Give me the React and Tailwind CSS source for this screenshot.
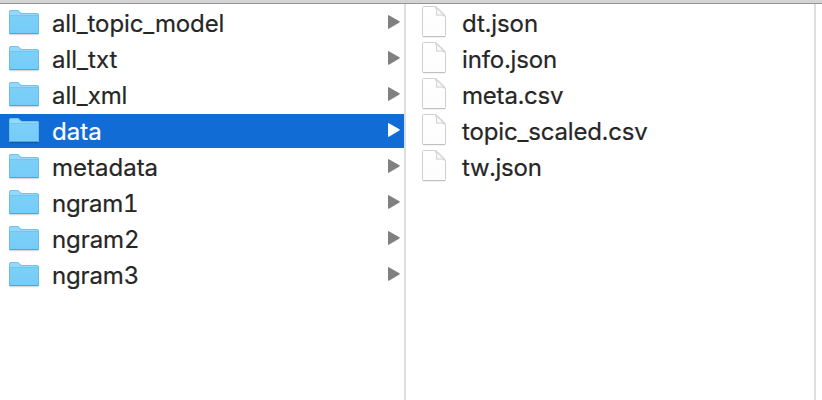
const folders = [
  { name: "all_topic_model", spacing: "tracking-[-0.11px]" },
  { name: "all_txt", spacing: "tracking-[0px]" },
  { name: "all_xml", spacing: "tracking-[-0.1px]" },
  { name: "data", spacing: "tracking-[0px]", selected: true },
  { name: "metadata", spacing: "tracking-[0px]" },
  { name: "ngram1", spacing: "tracking-[-0.3px]" },
  { name: "ngram2", spacing: "tracking-[-0.1px]" },
  { name: "ngram3", spacing: "tracking-[-0.15px]" },
];

const files = [
  { name: "dt.json", spacing: "tracking-[-0.05px]" },
  { name: "info.json", spacing: "tracking-[-0.1px]" },
  { name: "meta.csv", spacing: "tracking-[-0.2px]" },
  { name: "topic_scaled.csv", spacing: "tracking-[-0.16px]" },
  { name: "tw.json", spacing: "tracking-[-0.25px]" },
];

function Gradients() {
  return (
    <svg width="0" height="0" className="absolute">
      <defs>
        <linearGradient id="folderFront" x1="0" y1="0" x2="0" y2="1">
          <stop offset="0" stopColor="#7dcff7" />
          <stop offset="1" stopColor="#74cdf8" />
        </linearGradient>
        <linearGradient id="paper" x1="0" y1="0" x2="0" y2="1">
          <stop offset="0" stopColor="#ffffff" />
          <stop offset="1" stopColor="#fdfdfd" />
        </linearGradient>
      </defs>
    </svg>
  );
}

function FolderIcon() {
  return (
    <svg width="32" height="34" viewBox="0 0 32 34" className="shrink-0">
      <path d="M1.5 28.7H30.5" stroke="#000" strokeOpacity="0.16" strokeWidth="1.2" />
      <path
        d="M1 6Q1 4 3 4H9.3Q10.3 4 11 4.7L12.3 6.2Q13 7 14 7H29Q31 7 31 9V27Q31 28 30 28H2Q1 28 1 27Z"
        fill="#93d9fb"
      />
      <path d="M1 9H31V27Q31 28 30 28H2Q1 28 1 27Z" fill="url(#folderFront)" />
      <path
        d="M1.5 27V6Q1.5 4.5 3 4.5H9.3Q10.2 4.5 10.8 5.2L12 6.6Q12.8 7.5 14 7.5H29Q30.5 7.5 30.5 9V27"
        fill="none"
        stroke="#62b5dd"
        strokeOpacity="0.65"
      />
      <path d="M2 9.5H30" stroke="#63bbe6" strokeOpacity="0.45" />
      <path d="M1.5 27.5H30.5" stroke="#52a5cf" />
    </svg>
  );
}

function FileIcon() {
  return (
    <svg width="28" height="34" viewBox="0 0 28 34" className="shrink-0">
      <path d="M3 31H25" stroke="#000" strokeOpacity="0.09" />
      <path
        d="M2.5 1.5Q2.5 .5 3.5 .5H14.5Q16.2 .5 17.5 1.8L24.2 8.5Q25.5 9.8 25.5 11.5V29.5Q25.5 30.5 24.5 30.5H3.5Q2.5 30.5 2.5 29.5Z"
        fill="url(#paper)"
        stroke="#cecece"
      />
      <path d="M15.6 1.2Q17 3.5 16.6 9.2Q22 8.3 24.8 10Z" fill="#fafafa" stroke="#c8c8c8" strokeWidth="0.9" />
      <path d="M3 30.5H25" stroke="#c0c0c0" />
    </svg>
  );
}

function Arrow({ selected }) {
  return (
    <svg width="12" height="14" viewBox="0 0 12 14" className={selected ? "fill-white" : "fill-[#808080]"}>
      <path d="M0 .7Q0-.2 .9 .2L11.4 6.2Q12.2 6.8 11.4 7.4L.9 13.7Q0 14.1 0 13.2Z" />
    </svg>
  );
}

export default function App() {
  return (
    <div className="flex h-[400px] w-[822px] flex-col overflow-hidden bg-white font-['Inter',sans-serif] text-[24px] leading-[34px] text-[#262626] tabular-nums [-webkit-text-stroke:0.2px_currentColor]">
      <Gradients />
      <header className="h-1 shrink-0 border-b border-[#969696] bg-[#d4d4d4]" />
      <main className="flex min-h-0 flex-1">
        <ul className="flex w-[406px] shrink-0 flex-col gap-0.5 border-r-2 border-[#dedede] pt-0.5">
          {folders.map((f) => (
            <li
              key={f.name}
              className={`flex h-[34px] items-center pr-1 pl-2 ${f.selected ? "bg-[#116cd6] text-white" : ""}`}
            >
              <FolderIcon />
              <span className={`ml-3 flex-1 pt-0.5 whitespace-nowrap ${f.spacing}`}>{f.name}</span>
              <div className="pb-0.5">
                <Arrow selected={f.selected} />
              </div>
            </li>
          ))}
        </ul>
        <ul className="flex w-[410px] shrink-0 flex-col gap-0.5 border-r-2 border-[#dedede] pt-0.5">
          {files.map((f) => (
            <li key={f.name} className="flex h-[34px] items-center pl-[14px]">
              <FileIcon />
              <span className={`ml-[14px] pt-0.5 whitespace-nowrap ${f.spacing}`}>{f.name}</span>
            </li>
          ))}
        </ul>
      </main>
    </div>
  );
}
